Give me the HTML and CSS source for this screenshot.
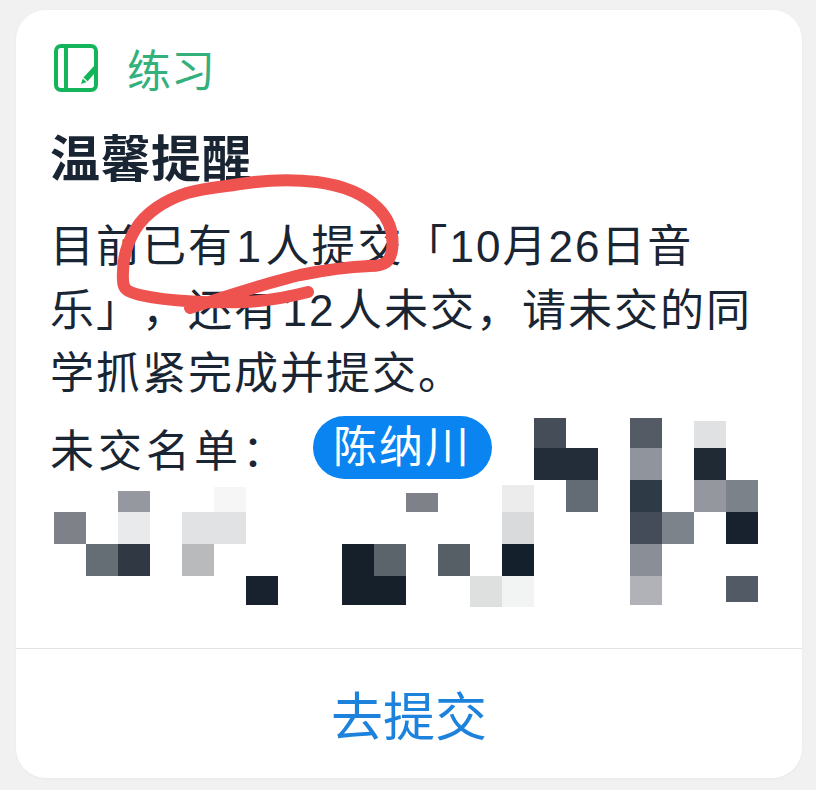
FILE: index.html
```html
<!DOCTYPE html>
<html lang="zh-CN">
<head>
    <meta charset="UTF-8">
    <meta name="viewport" content="width=device-width, initial-scale=1.0">
    <title>练习</title>
    <link rel="stylesheet" href="styles.css">
</head>
<body>
    <div class="card">
        <div class="card-body">
            <div class="card-head">
                <svg class="head-icon" viewBox="0 0 44 48" width="44" height="48">
                    <rect x="2" y="2" width="40" height="44" rx="5" fill="none" stroke="#14b45a" stroke-width="4"/>
                    <path d="M12 2V46" fill="none" stroke="#14b45a" stroke-width="4"/>
                    <path d="M27 40l2-6 11-12v8l-7 8z" fill="#14b45a"/>
                    <path d="M28.5 33.5l5 4.5" fill="none" stroke="#fff" stroke-width="1.2"/>
                </svg>
                <span class="head-label">练习</span>
            </div>
            <h1 class="title">温馨提醒</h1>
            <p class="notice">目前已有<span class="num">1</span>人提交「10月26日音乐」，还有<span class="num">12</span>人未交，请未交的同学抓紧完成并提交。</p>
            <div class="names">
                <span class="names-label">未交名单：</span>
                <span class="pill">陈纳川</span>
            </div>
            <!-- 打码 -->
            <svg class="mosaic" viewBox="0 0 816 790" width="816" height="790">
                <rect x="534" y="418" width="32" height="30" fill="#454e58"/>
                <rect x="534" y="448" width="64" height="32" fill="#232d39"/>
                <rect x="566" y="480" width="32" height="32" fill="#636b75"/>
                <rect x="630" y="418" width="32" height="30" fill="#555b64"/>
                <rect x="630" y="448" width="32" height="32" fill="#90949c"/>
                <rect x="630" y="480" width="32" height="32" fill="#2f3a47"/>
                <rect x="630" y="512" width="32" height="32" fill="#434c58"/>
                <rect x="630" y="544" width="32" height="32" fill="#8a8e96"/>
                <rect x="630" y="576" width="32" height="29" fill="#b0b2b8"/>
                <rect x="662" y="512" width="32" height="32" fill="#7c838b"/>
                <rect x="694" y="421" width="32" height="27" fill="#e0e1e3"/>
                <rect x="694" y="448" width="32" height="32" fill="#1f2a35"/>
                <rect x="694" y="480" width="32" height="32" fill="#94979e"/>
                <rect x="726" y="480" width="32" height="32" fill="#7b828a"/>
                <rect x="726" y="512" width="32" height="32" fill="#18222f"/>
                <rect x="726" y="576" width="32" height="26" fill="#525b65"/>
                <rect x="54" y="512" width="32" height="32" fill="#7e8288"/>
                <rect x="86" y="544" width="32" height="32" fill="#656d75"/>
                <rect x="118" y="544" width="32" height="32" fill="#2f3843"/>
                <rect x="118" y="491" width="32" height="21" fill="#95989e"/>
                <rect x="118" y="512" width="32" height="32" fill="#e9eaeb"/>
                <rect x="182" y="512" width="64" height="32" fill="#e0e2e3"/>
                <rect x="214" y="487" width="32" height="25" fill="#f6f6f6"/>
                <rect x="182" y="544" width="32" height="32" fill="#b9babc"/>
                <rect x="246" y="576" width="32" height="29" fill="#18222f"/>
                <rect x="342" y="544" width="32" height="32" fill="#16202b"/>
                <rect x="374" y="544" width="32" height="32" fill="#5c646b"/>
                <rect x="342" y="576" width="64" height="29" fill="#16202b"/>
                <rect x="406" y="493" width="32" height="19" fill="#7e8288"/>
                <rect x="438" y="544" width="32" height="32" fill="#565f66"/>
                <rect x="470" y="576" width="32" height="31" fill="#dee0e0"/>
                <rect x="502" y="576" width="32" height="31" fill="#f2f3f3"/>
                <rect x="502" y="544" width="32" height="32" fill="#14202b"/>
                <rect x="502" y="512" width="32" height="32" fill="#d8dadb"/>
                <rect x="502" y="485" width="32" height="27" fill="#ececec"/>
            </svg>
        </div>
        <div class="card-foot">去提交</div>
    </div>
    <!-- 红笔圈 -->
    <svg class="scribble" viewBox="0 0 816 790" width="816" height="790">
        <path d="M308 292C285 298 265 301 245 302C215 303 170 302 140 295C128 292 123 290 123 280C122 262 126 245 135 230C145 213 165 200 187 193C205 188 222 187 240 184C265 180 290 179 317 182C340 185 362 192 378 208C390 220 394 235 392 250C390 262 385 266 370 266C345 267 320 271 300 275C270 282 240 292 190 308" fill="none" stroke="#ee5350" stroke-width="12" stroke-linecap="round" stroke-linejoin="round"/>
    </svg>
</body>
</html>
```

FILE: styles.css
```css
body {
    font-family: "Liberation Sans", "Noto Sans CJK SC", sans-serif;
    background-color: #f1f1f1;
    margin: 0;
    height: 790px;
    overflow: hidden;
    position: relative;
}
.card {
    display: flex;
    flex-direction: column;
    height: 768px;
    margin: 10px 14px 12px 16px;
    background-color: #fff;
    border-radius: 30px;
    box-shadow: 0 1px 3px rgba(0, 0, 0, 0.04);
    overflow: hidden;
}
.card-body {
    flex: 1;
    padding: 34px 34px 0;
}
.card-head {
    display: flex;
    align-items: center;
    height: 48px;
}
.head-icon {
    margin-left: 4px;
}
.head-label {
    margin-left: 29px;
    font-size: 44px;
    color: #34b07c;
}
.title {
    margin: 33px 0 0;
    font-size: 50px;
    line-height: 70px;
    letter-spacing: 0.5px;
    font-weight: bold;
    color: #1a2533;
}
.notice {
    margin: 20px 0 0;
    font-size: 44px;
    line-height: 63.5px;
    letter-spacing: 2px;
    text-spacing-trim: space-all;
    color: #1a2533;
}
.num {
    margin: 0 2.5px;
}
.names {
    display: flex;
    align-items: center;
    margin-top: 10px;
}
.names-label {
    font-size: 44px;
    letter-spacing: 4px;
    color: #1a2533;
}
.pill {
    margin-left: 23px;
    padding: 0 21px 0 20px;
    height: 63px;
    line-height: 63px;
    border-radius: 32px;
    background-color: #0a84f0;
    color: #fff;
    font-size: 44px;
    letter-spacing: 2px;
}
.mosaic, .scribble {
    position: absolute;
    top: 0;
    left: 0;
}
.card-foot {
    height: 129px;
    line-height: 138px;
    border-top: 1px solid #e2e2e2;
    text-align: center;
    font-size: 52px;
    color: #1d82dc;
}
```
